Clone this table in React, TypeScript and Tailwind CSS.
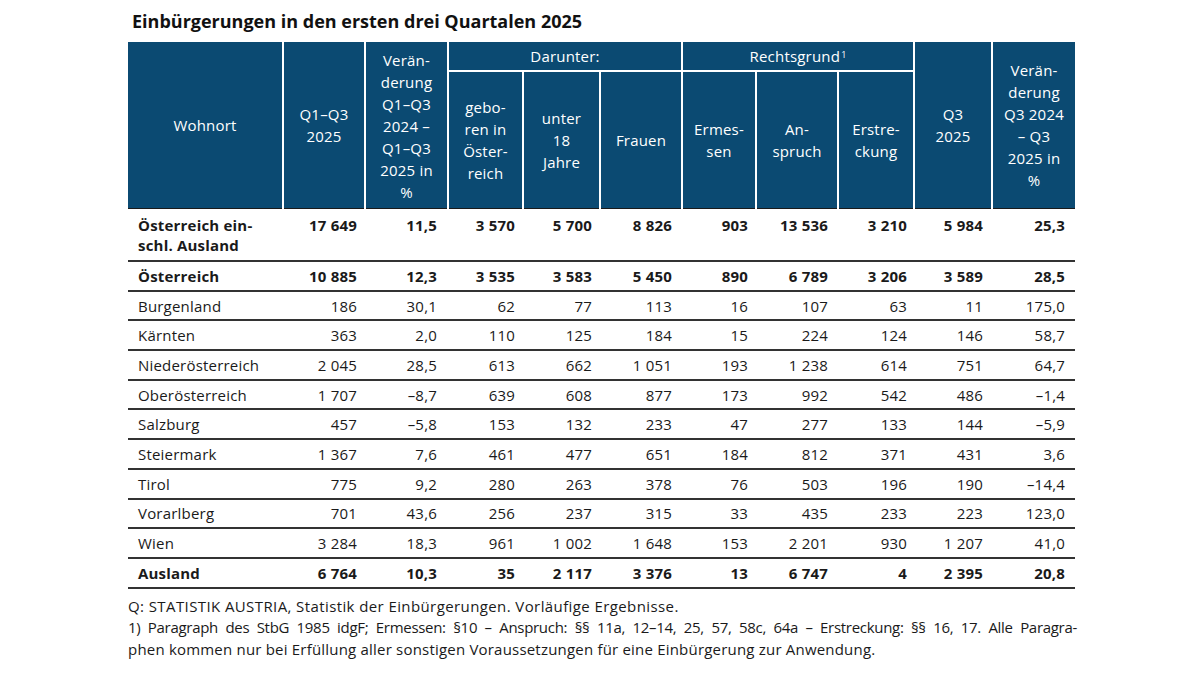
import React from 'react';

// Spaltenbreiten in px (Summe 947)
const colWidths = [155, 82, 83, 75, 77, 82, 74, 82, 76, 78, 83];

type Row = {
  name: React.ReactNode;
  values: string[];
  bold?: boolean;
  tall?: boolean;
};

const rows: Row[] = [
  {
    name: (
      <>
        Österreich ein-
        <br />
        schl. Ausland
      </>
    ),
    values: ['17 649', '11,5', '3 570', '5 700', '8 826', '903', '13 536', '3 210', '5 984', '25,3'],
    bold: true,
    tall: true,
  },
  {
    name: 'Österreich',
    values: ['10 885', '12,3', '3 535', '3 583', '5 450', '890', '6 789', '3 206', '3 589', '28,5'],
    bold: true,
  },
  { name: 'Burgenland', values: ['186', '30,1', '62', '77', '113', '16', '107', '63', '11', '175,0'] },
  { name: 'Kärnten', values: ['363', '2,0', '110', '125', '184', '15', '224', '124', '146', '58,7'] },
  { name: 'Niederösterreich', values: ['2 045', '28,5', '613', '662', '1 051', '193', '1 238', '614', '751', '64,7'] },
  { name: 'Oberösterreich', values: ['1 707', '–8,7', '639', '608', '877', '173', '992', '542', '486', '–1,4'] },
  { name: 'Salzburg', values: ['457', '–5,8', '153', '132', '233', '47', '277', '133', '144', '–5,9'] },
  { name: 'Steiermark', values: ['1 367', '7,6', '461', '477', '651', '184', '812', '371', '431', '3,6'] },
  { name: 'Tirol', values: ['775', '9,2', '280', '263', '378', '76', '503', '196', '190', '–14,4'] },
  { name: 'Vorarlberg', values: ['701', '43,6', '256', '237', '315', '33', '435', '233', '223', '123,0'] },
  { name: 'Wien', values: ['3 284', '18,3', '961', '1 002', '1 648', '153', '2 201', '930', '1 207', '41,0'] },
  {
    name: 'Ausland',
    values: ['6 764', '10,3', '35', '2 117', '3 376', '13', '6 747', '4', '2 395', '20,8'],
    bold: true,
  },
];

// Rechter Innenabstand je Zahlenspalte
const padRight = ['pr-[8px]', 'pr-[11px]', 'pr-[8px]', 'pr-[8px]', 'pr-[10px]', 'pr-[8px]', 'pr-[10px]', 'pr-[7px]', 'pr-[9px]', 'pr-[10px]'];

function lines(parts: string[]) {
  return parts.map((p, i) => (
    <React.Fragment key={i}>
      {i > 0 && <br />}
      {p}
    </React.Fragment>
  ));
}

export default function App() {
  return (
    <div
      className="w-[1200px] h-[675px] bg-white text-[#1a1a1a] pl-[128px] pt-[8px]"
      style={{ fontFamily: '"Open Sans", Lato, sans-serif' }}
    >
      <h1 className="text-[18px] font-bold leading-[26px] ml-[4px] text-[#111]">
        Einbürgerungen in den ersten drei Quartalen 2025
      </h1>

      <table className="mt-[8px] w-[947px] table-fixed border-collapse text-[15px] tracking-[0.2px]">
        <colgroup>
          {colWidths.map((w, i) => (
            <col key={i} style={{ width: w }} />
          ))}
        </colgroup>
        <thead className="bg-[#0b4a72] text-white leading-[22px]">
          <tr className="h-[29px]">
            <th rowSpan={2} className="font-normal border-b border-[#1a1a1a] text-center align-middle">
              Wohnort
            </th>
            <th rowSpan={2} className="font-normal border-l-2 border-b border-l-white border-b-[#1a1a1a] text-center">
              {lines(['Q1–Q3', '2025'])}
            </th>
            <th rowSpan={2} className="font-normal border-l-2 border-b border-l-white border-b-[#1a1a1a] text-center pt-[2px]">
              {lines(['Verän-', 'derung', 'Q1–Q3', '2024 –', 'Q1–Q3', '2025 in', '%'])}
            </th>
            <th colSpan={3} className="font-normal border-l-2 border-white text-center">
              Darunter:
            </th>
            <th colSpan={3} className="font-normal border-l-2 border-white text-center">
              Rechtsgrund<sup className="text-[9px] ml-[1px]">1</sup>
            </th>
            <th rowSpan={2} className="font-normal border-l-2 border-b border-l-white border-b-[#1a1a1a] text-center">
              {lines(['Q3', '2025'])}
            </th>
            <th rowSpan={2} className="font-normal border-l-2 border-b border-l-white border-b-[#1a1a1a] text-center">
              {lines(['Verän-', 'derung', 'Q3 2024', '– Q3', '2025 in', '%'])}
            </th>
          </tr>
          <tr className="h-[137px]">
            {[
              ['gebo-', 'ren in', 'Öster-', 'reich'],
              ['unter', '18', 'Jahre'],
              ['Frauen'],
              ['Ermes-', 'sen'],
              ['An-', 'spruch'],
              ['Erstre-', 'ckung'],
            ].map((t, i) => (
              <th
                key={i}
                className="font-normal border-l-2 border-t-2 border-b border-l-white border-t-white border-b-[#1a1a1a] text-center"
              >
                {lines(t)}
              </th>
            ))}
          </tr>
        </thead>
        <tbody className="leading-[20px]">
          {rows.map((r, ri) => (
            <tr
              key={ri}
              className={`${r.tall ? 'h-[53px]' : 'h-[29.7px]'} border-b-2 border-[#333] ${
                r.bold ? 'font-bold' : ''
              }`}
            >
              <td className={`pl-[10px] whitespace-nowrap ${r.tall ? 'align-top pt-[6px]' : 'align-middle'}`}>{r.name}</td>
              {r.values.map((v, vi) => (
                <td
                  key={vi}
                  className={`text-right whitespace-nowrap ${padRight[vi]} ${r.tall ? 'align-top pt-[6px]' : 'align-middle'}`}
                >
                  {v}
                </td>
              ))}
            </tr>
          ))}
        </tbody>
      </table>

      <div className="mt-[7px] w-[949px] text-[15px] leading-[21.5px] text-[#1a1a1a]">
        <div className="tracking-[0.4px]">Q: STATISTIK AUSTRIA, Statistik der Einbürgerungen. Vorläufige Ergebnisse.</div>
        <div className="whitespace-nowrap tracking-[-0.3px] text-justify [text-align-last:justify]">
          1) Paragraph des StbG 1985 idgF; Ermessen: §10 – Anspruch: §§ 11a, 12–14, 25, 57, 58c, 64a – Erstreckung: §§ 16, 17. Alle Paragra-
        </div>
        <div className="tracking-[0.2px]">phen kommen nur bei Erfüllung aller sonstigen Voraussetzungen für eine Einbürgerung zur Anwendung.</div>
      </div>
    </div>
  );
}
